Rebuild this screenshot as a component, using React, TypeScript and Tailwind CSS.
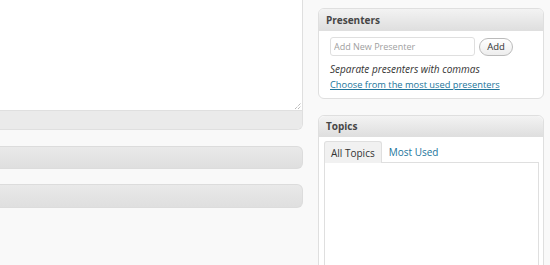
import React from 'react';

const font = { fontFamily: '"Open Sans", "DejaVu Sans", sans-serif' };

const ResizeGrip: React.FC = () => (
    <svg className="absolute right-[1px] bottom-[1px]" width="7" height="7" viewBox="0 0 7 7">
        <path d="M1 7 L7 1 M4 7 L7 4" stroke="#9a9a9a" strokeWidth="1" strokeDasharray="1 1" />
    </svg>
);

export default function App() {
    return (
        <div className="flex h-[265px] w-[550px] overflow-hidden bg-[#f9f9f9] text-[#333]" style={font}>
            {/* Main column */}
            <div className="flex w-[303px] shrink-0 flex-col">
                <div className="flex h-[130px] shrink-0 flex-col overflow-hidden rounded-br-[6px] border-r border-b border-[#dfdfdf]">
                    <div className="relative h-[111px] border-b border-[#dfdfdf] bg-white">
                        <ResizeGrip />
                    </div>
                    <div className="flex-1 bg-[#eaeaea]" />
                </div>
                <div className="mt-[16px] h-[23px] shrink-0 rounded-r-[6px] border border-l-0 border-[#dcdcdc] bg-gradient-to-b from-[#e9e9e9] to-[#dfdfdf]" />
                <div className="mt-[15px] h-[24px] shrink-0 rounded-r-[6px] border border-l-0 border-[#dcdcdc] bg-gradient-to-b from-[#e9e9e9] to-[#dfdfdf]" />
            </div>

            {/* Side column */}
            <div className="ml-[15px] flex w-[226px] shrink-0 flex-col pt-[8px]">
                <div className="h-[91px] shrink-0 overflow-hidden rounded-[6px] border border-[#dfdfdf] bg-white">
                    <div className="flex h-[22px] items-center border-b border-[#dfdfdf] bg-gradient-to-b from-[#f3f3f3] to-[#dfdfdf] px-[7px] text-[10px] leading-none font-bold text-[#464646]">
                        Presenters
                    </div>
                    <div className="px-[11px] pt-[6px]">
                        <div className="flex items-center gap-[4px]">
                            <input
                                className="h-[19px] w-[145px] rounded-[3px] border border-[#dfdfdf] bg-white px-[3px] text-[9px] text-[#333] outline-none placeholder:text-[#a0a0a0]"
                                placeholder="Add New Presenter"
                                style={font}
                            />
                            <button
                                className="h-[18px] w-[34px] rounded-full border border-[#bbb] bg-gradient-to-b from-white to-[#ededed] text-[9.5px] leading-none text-[#333]"
                                style={font}
                            >
                                Add
                            </button>
                        </div>
                        <p className="mt-[7px] text-[10px] leading-[12px] italic text-[#333]">Separate presenters with commas</p>
                        <a href="#" className="mt-[4px] block text-[9.3px] leading-[12px] text-[#21759b] underline">
                            Choose from the most used presenters
                        </a>
                    </div>
                </div>

                <div className="mt-[16px] flex-1 rounded-t-[6px] border border-[#dfdfdf] bg-white">
                    <div className="flex h-[21px] items-center rounded-t-[6px] border-b border-[#dfdfdf] bg-gradient-to-b from-[#f3f3f3] to-[#dfdfdf] px-[7px] text-[10px] leading-none font-bold text-[#464646]">
                        Topics
                    </div>
                    <div className="px-[5px] pt-[4px]">
                        <div className="flex items-end text-[10px] leading-none">
                            <span className="relative z-10 -mb-px flex h-[22px] items-center rounded-t-[3px] border border-b-0 border-[#dfdfdf] bg-[#f1f1f1] px-[6px] text-[#333]">
                                All Topics
                            </span>
                            <a href="#" className="flex h-[21px] items-center px-[7px] text-[#21759b]">
                                Most Used
                            </a>
                        </div>
                        <div className="h-[120px] w-[215px] border border-[#dfdfdf] bg-white" />
                    </div>
                </div>
            </div>
        </div>
    );
}
